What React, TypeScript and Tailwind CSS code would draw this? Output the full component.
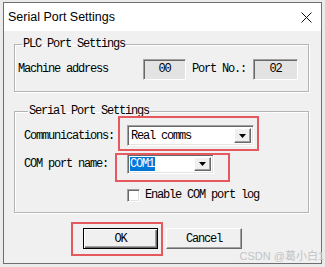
import React from 'react'

const mono = { fontFamily: '"Liberation Mono", "Courier New", monospace' }

const Sunken = ({ className, children }: any) => (
    <div
        className={`border border-t-[#a0a0a0] border-l-[#a0a0a0] border-r-white border-b-white shadow-[inset_1px_1px_0_#696969,inset_-1px_-1px_0_#e3e3e3] ${className}`}
    >
        {children}
    </div>
)

const DropArrow = () => (
    <div className="w-[17px] h-full bg-[#f0f0f0] border border-t-white border-l-white border-r-[#696969] border-b-[#696969] shadow-[inset_-1px_-1px_0_#a0a0a0] flex items-center justify-center">
        <svg width="7" height="4" viewBox="0 0 7 4">
            <path d="M0 0h7L3.5 4z" fill="#000" />
        </svg>
    </div>
)

const Mark = ({ className }: any) => (
    <div className={`absolute border-2 border-[#e5585d] pointer-events-none ${className}`} />
)

const App = () => {
    return (
        <div className="w-[325px] h-[267px] bg-[#ebebeb] overflow-hidden relative" style={mono}>
            <div className="ml-[3px] mt-[2px] w-[319px] h-[262px] border border-[#6f6f6f] flex flex-col text-[12px] tracking-[-1.2px] text-black">
                <div className="h-[28px] bg-white flex items-center justify-between pl-[4px] pr-[9px]">
                    <span className="text-[12.5px] tracking-normal" style={{ fontFamily: '"Liberation Sans", Arial, sans-serif' }}>
                        Serial Port Settings
                    </span>
                    <svg width="11" height="11" viewBox="0 0 11 11" className="mt-[1px]">
                        <path d="M0.5 0.5l10 10M10.5 0.5l-10 10" stroke="#111" strokeWidth="1" />
                    </svg>
                </div>
                <div className="flex-1 bg-[#f0f0f0] pl-[10px]">
                    <fieldset className="mt-[6px] w-[295px] border border-[#b4b4b4] shadow-[inset_1px_1px_0_#fff,1px_1px_0_#fff] pl-[3px] pb-[12px]">
                        <legend className="ml-[4px] px-[1px] leading-[14px]">PLC Port Settings</legend>
                        <div className="flex items-center h-[20px] mt-[8px]">
                            <span className="w-[125px]">Machine address</span>
                            <Sunken className="w-[43px] h-[21px] !bg-[#e3e3e3] flex items-center justify-center">00</Sunken>
                            <span className="ml-[6px] w-[61px]">Port No.:</span>
                            <Sunken className="w-[45px] h-[21px] !bg-[#e3e3e3] flex items-center justify-center">02</Sunken>
                        </div>
                    </fieldset>
                    <fieldset className="mt-[12px] w-[295px] border border-[#b4b4b4] shadow-[inset_1px_1px_0_#fff,1px_1px_0_#fff] pl-[9px] pb-[10px]">
                        <legend className="ml-[4px] px-[1px] leading-[14px]">Serial Port Settings</legend>
                        <div className="flex items-center mt-[7px]">
                            <span className="w-[103px]">Communications:</span>
                            <div className="relative">
                                <Sunken className="w-[127px] h-[21px] bg-white flex items-center justify-between p-[2px]">
                                    <span className="pl-[1px]">Real comms</span>
                                    <DropArrow />
                                </Sunken>
                                <Mark className="-left-[9px] -top-[9px] -right-[5px] -bottom-[5px]" />
                            </div>
                        </div>
                        <div className="flex items-center mt-[8px]">
                            <span className="w-[103px]">COM port name:</span>
                            <div className="relative">
                                <Sunken className="w-[87px] h-[20px] bg-white flex items-center justify-between p-[2px]">
                                    <span className="bg-[#0078d7] text-white leading-[14px] pr-[1px]">COM1</span>
                                    <DropArrow />
                                </Sunken>
                                <Mark className="-left-[12px] -top-[1px] -right-[16px] -bottom-[8px]" />
                            </div>
                        </div>
                        <div className="flex items-center mt-[14px] h-[14px] pl-[103px]">
                            <div className="w-[13px] h-[13px] bg-white border border-t-[#a0a0a0] border-l-[#a0a0a0] border-r-white border-b-white shadow-[inset_1px_1px_0_#696969,inset_-1px_-1px_0_#e3e3e3]" />
                            <span className="ml-[5px]">Enable COM port log</span>
                        </div>
                    </fieldset>
                    <div className="flex gap-[8px] mt-[15px] pl-[69px]">
                        <div className="relative">
                            <button className="w-[75px] h-[21px] bg-[#f0f0f0] border border-black shadow-[inset_1px_1px_0_#fff,inset_-1px_-1px_0_#696969,inset_-2px_-2px_0_#a0a0a0] tracking-[-1.2px]">
                                OK
                            </button>
                            <Mark className="-left-[12px] -top-[6px] -right-[5px] -bottom-[7px]" />
                        </div>
                        <button className="w-[76px] h-[21px] bg-[#f0f0f0] border border-t-white border-l-white border-r-[#696969] border-b-[#696969] shadow-[inset_-1px_-1px_0_#a0a0a0] tracking-[-1.2px]">
                            Cancel
                        </button>
                    </div>
                </div>
            </div>
            <span
                className="absolute right-[1px] bottom-[5px] text-[11px] text-[#c4c4c4] leading-none tracking-normal"
                style={{ fontFamily: '"Liberation Sans", "Noto Sans CJK SC", sans-serif' }}
            >
                CSDN @葛小白1
            </span>
        </div>
    )
}

export default App
